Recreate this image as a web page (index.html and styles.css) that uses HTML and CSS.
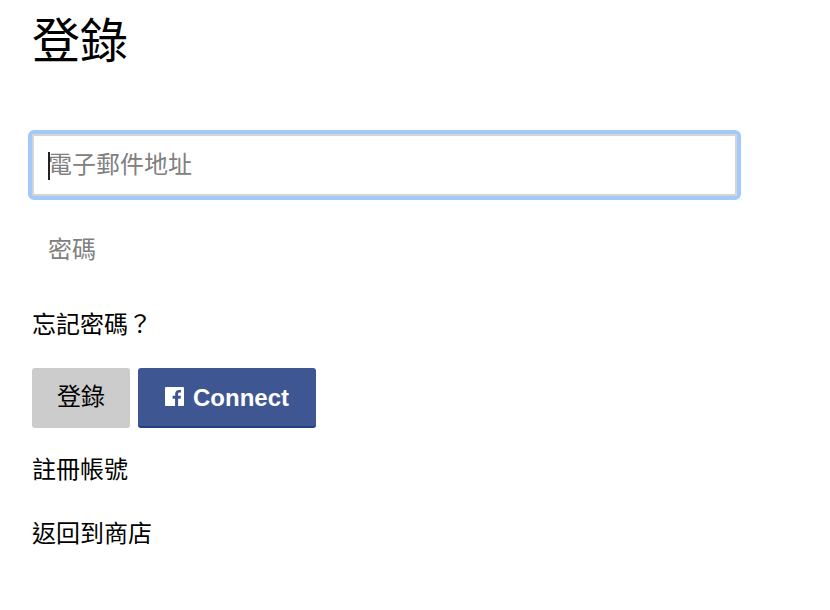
FILE: index.html
```html
<!DOCTYPE html>
<html lang="zh-Hant">
<head>
  <meta charset="UTF-8">
  <meta name="viewport" content="width=device-width, initial-scale=1.0">
  <title>登錄</title>
  <link rel="stylesheet" href="styles.css">
</head>
<body>
  <div class="login">
    <h1>登錄</h1>
    <form class="login-form">
      <div class="field">
        <input class="text-input focused" type="email" placeholder="電子郵件地址">
        <span class="caret"></span>
      </div>
      <div class="field">
        <input class="text-input" type="password" placeholder="密碼">
      </div>
      <a class="link forgot" href="#">忘記密碼？</a>
      <div class="actions">
        <button class="btn btn-login" type="button">登錄</button>
        <button class="btn btn-facebook" type="button">
          <svg class="fb-icon" viewBox="0 0 20 20" width="19" height="19" aria-hidden="true">
            <path fill="#fff" d="M1.1 0h17.8c.6 0 1.1.5 1.1 1.1v17.8c0 .6-.5 1.1-1.1 1.1h-5.1v-7.7h2.6l.4-3h-3V7.4c0-.9.2-1.5 1.5-1.5h1.6V3.2c-.3 0-1.2-.1-2.3-.1-2.300 0-3.900 1.400-3.900 4v2.200H8v3h2.600V20H1.100C.5 20 0 19.500 0 18.900V1.100C0 .5.500 0 1.100 0z"/>
          </svg>
          Connect
        </button>
      </div>
      <a class="link" href="#">註冊帳號</a>
      <a class="link back" href="#">返回到商店</a>
    </form>
  </div>
</body>
</html>
```

FILE: styles.css
```css
body {
  margin: 0;
  background-color: #fff;
  color: #000;
  font-family: "Liberation Sans", "Noto Sans CJK TC", sans-serif;
  font-size: 24px;
}

.login {
  padding: 12px 0 0 32px;
  width: 705px;
}

h1 {
  margin: 0 0 62px;
  font-size: 48px;
  font-weight: 400;
  line-height: 60px;
}

.login-form {
  display: flex;
  flex-direction: column;
  align-items: flex-start;
}

.field {
  position: relative;
  width: 100%;
  margin-bottom: 23px;
}

.text-input {
  display: block;
  box-sizing: border-box;
  width: 100%;
  height: 62px;
  padding: 0 14px;
  border: 2px solid transparent;
  border-radius: 2px;
  background-color: #fff;
  font-family: inherit;
  font-size: 24px;
}

.text-input::placeholder {
  color: #808080;
  opacity: 1;
}

.focused {
  border-color: #d4d4d4;
  outline: 4px solid #a3c8fb;
  outline-offset: 0;
}

.caret {
  position: absolute;
  left: 16px;
  top: 18px;
  width: 2px;
  height: 28px;
  background-color: #222;
}

.link {
  color: #000;
  line-height: 32px;
  text-decoration: none;
}

.forgot {
  margin-top: 5px;
}

.actions {
  display: flex;
  gap: 8px;
  margin: 27px 0 26px;
}

.btn {
  height: 60px;
  border: 0;
  border-radius: 3px;
  font-family: inherit;
  font-size: 24px;
}

.btn-login {
  width: 98px;
  padding-bottom: 8px;
  background-color: #ccc;
  color: #000;
}

.btn-facebook {
  display: flex;
  align-items: center;
  justify-content: center;
  gap: 9px;
  width: 178px;
  padding-top: 2px;
  border-bottom: 2px solid #1f3f86;
  background-color: #3e5792;
  color: #fff;
  font-weight: 700;
}

.fb-icon {
  margin: -3px 0 0 0;
}

.back {
  margin-top: 32px;
}
```
